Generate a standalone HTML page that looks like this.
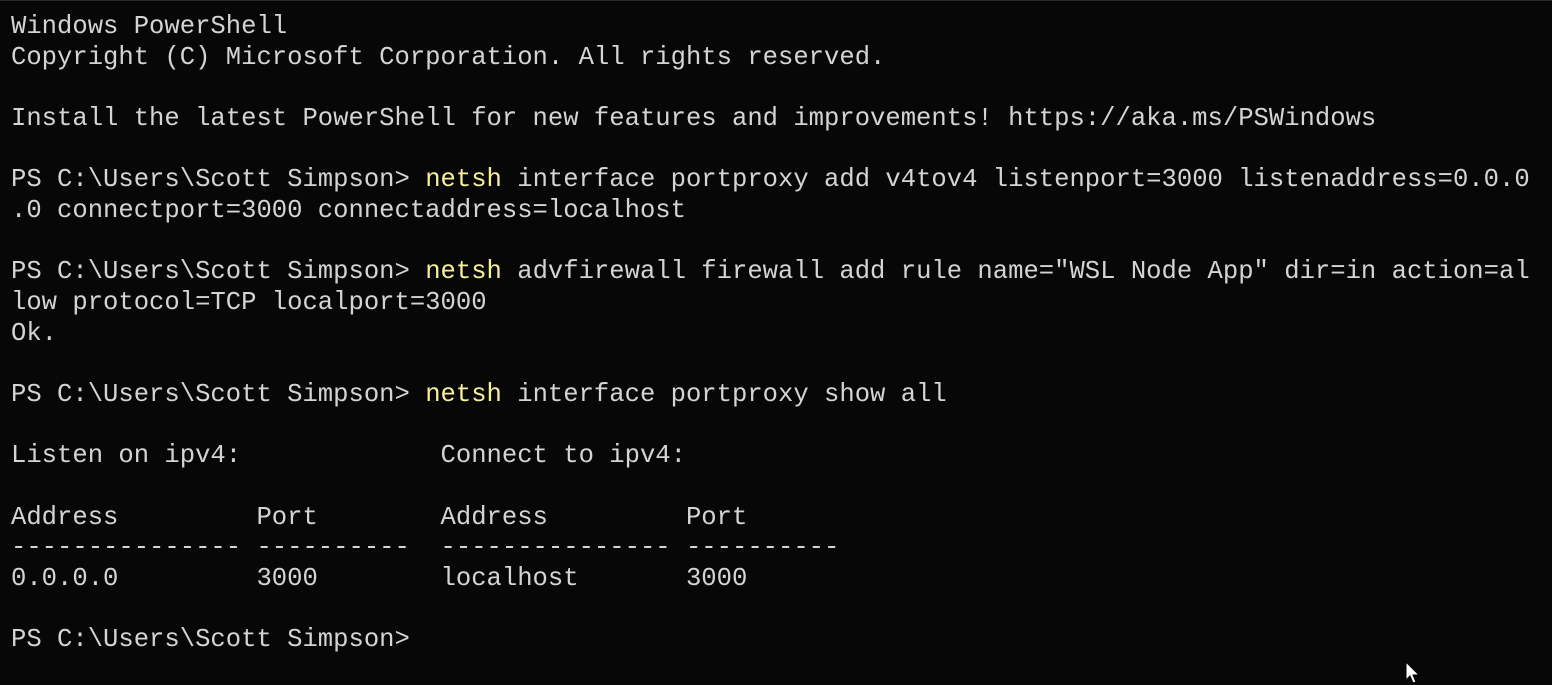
<!DOCTYPE html>
<html><head><meta charset="utf-8"><style>
html,body{margin:0;padding:0;}
body{width:1552px;height:685px;background:#070707;overflow:hidden;position:relative;border-top:1px solid #2a2a2a;box-sizing:border-box;}
pre{position:absolute;left:11px;top:11px;margin:0;font-family:"Liberation Mono",monospace;font-size:25.57px;line-height:30.65px;color:#d4d4d4;letter-spacing:0;}
.y{color:#f6ef9c;}
</style></head><body>
<pre>Windows PowerShell
Copyright (C) Microsoft Corporation. All rights reserved.

Install the latest PowerShell for new features and improvements! https://aka.ms/PSWindows

PS C:\Users\Scott Simpson&gt; <span class="y">netsh</span> interface portproxy add v4tov4 listenport=3000 listenaddress=0.0.0
.0 connectport=3000 connectaddress=localhost

PS C:\Users\Scott Simpson&gt; <span class="y">netsh</span> advfirewall firewall add rule name="WSL Node App" dir=in action=al
low protocol=TCP localport=3000
Ok.

PS C:\Users\Scott Simpson&gt; <span class="y">netsh</span> interface portproxy show all

Listen on ipv4:             Connect to ipv4:

Address         Port        Address         Port
--------------- ----------  --------------- ----------
0.0.0.0         3000        localhost       3000

PS C:\Users\Scott Simpson&gt;</pre>
<svg style="position:absolute;left:1405px;top:660px" width="18" height="24" viewBox="0 0 18 24"><path d="M1 1 L1 19 L5 15 L8 22 L11 21 L8 14 L14 14 Z" fill="#fff" stroke="#000" stroke-width="1"/></svg>
</body></html>
